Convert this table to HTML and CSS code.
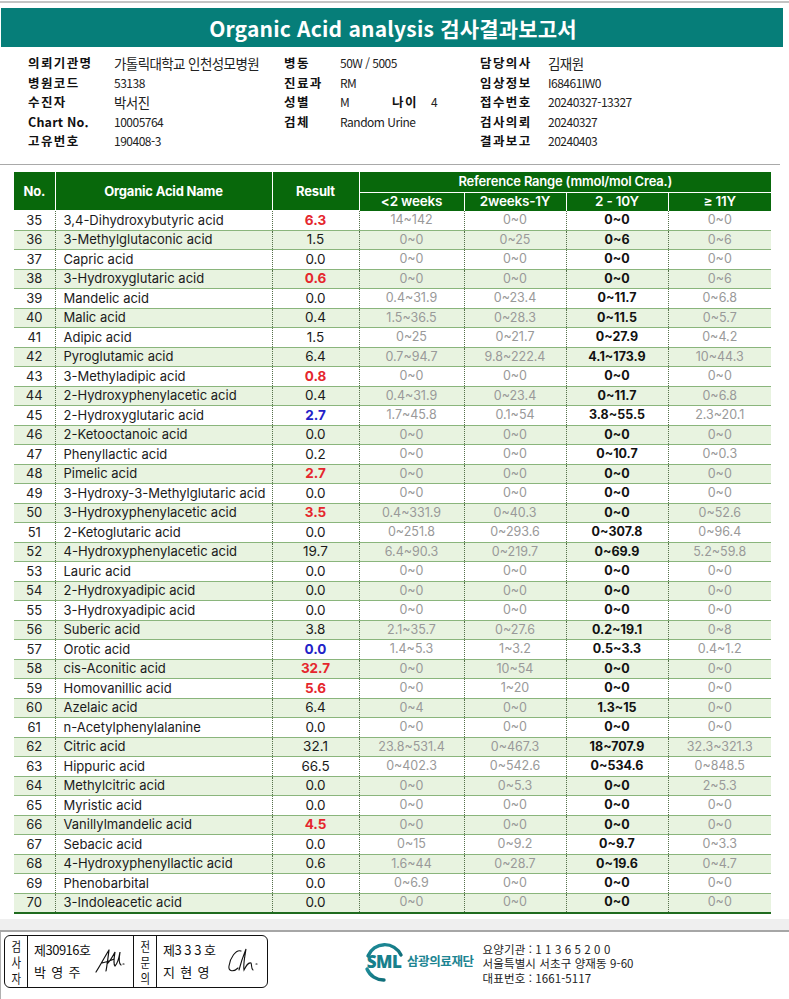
FILE: index.html
```html
<!DOCTYPE html>
<html lang="ko">
<head>
<meta charset="utf-8">
<title>Organic Acid analysis 검사결과보고서</title>
<link rel="stylesheet" href="styles.css">
</head>
<body>
<div class="page">
  <header class="title-bar"><h1>Organic Acid analysis 검사결과보고서</h1></header>

  <section class="info">
    <div class="lbl">의뢰기관명</div><div class="val ko">가톨릭대학교 인천성모병원</div>
    <div class="lbl">병동</div><div class="val">50W / 5005</div>
    <div class="lbl">담당의사</div><div class="val ko">김재원</div>

    <div class="lbl">병원코드</div><div class="val">53138</div>
    <div class="lbl">진료과</div><div class="val">RM</div>
    <div class="lbl">임상정보</div><div class="val">I68461IW0</div>

    <div class="lbl">수진자</div><div class="val ko">박서진</div>
    <div class="lbl">성별</div><div class="val"><span class="sex">M</span><span class="lbl age-lbl">나이</span><span>4</span></div>
    <div class="lbl">접수번호</div><div class="val">20240327-13327</div>

    <div class="lbl latin">Chart No.</div><div class="val">10005764</div>
    <div class="lbl">검체</div><div class="val">Random Urine</div>
    <div class="lbl">검사의뢰</div><div class="val">20240327</div>

    <div class="lbl">고유번호</div><div class="val">190408-3</div>
    <div></div><div></div>
    <div class="lbl">결과보고</div><div class="val">20240403</div>
  </section>

  <hr class="sep">

  <table class="results">
    <colgroup>
      <col class="c-no"><col class="c-name"><col class="c-res">
      <col class="c-r1"><col class="c-r2"><col class="c-r3"><col class="c-r4">
    </colgroup>
    <thead>
      <tr class="h1">
        <th rowspan="2">No.</th>
        <th rowspan="2">Organic Acid Name</th>
        <th rowspan="2">Result</th>
        <th colspan="4">Reference Range (mmol/mol Crea.)</th>
      </tr>
      <tr class="h2">
        <th>&lt;2 weeks</th><th>2weeks-1Y</th><th>2 - 10Y</th><th>≥ 11Y</th>
      </tr>
    </thead>
    <tbody id="rows">
      <tr><td>35</td><td>3,4-Dihydroxybutyric acid</td><td class="red">6.3</td><td>14~142</td><td>0~0</td><td>0~0</td><td>0~0</td></tr>
      <tr><td>36</td><td>3-Methylglutaconic acid</td><td>1.5</td><td>0~0</td><td>0~25</td><td>0~6</td><td>0~6</td></tr>
      <tr><td>37</td><td>Capric acid</td><td>0.0</td><td>0~0</td><td>0~0</td><td>0~0</td><td>0~0</td></tr>
      <tr><td>38</td><td>3-Hydroxyglutaric acid</td><td class="red">0.6</td><td>0~0</td><td>0~0</td><td>0~0</td><td>0~6</td></tr>
      <tr><td>39</td><td>Mandelic acid</td><td>0.0</td><td>0.4~31.9</td><td>0~23.4</td><td>0~11.7</td><td>0~6.8</td></tr>
      <tr><td>40</td><td>Malic acid</td><td>0.4</td><td>1.5~36.5</td><td>0~28.3</td><td>0~11.5</td><td>0~5.7</td></tr>
      <tr><td>41</td><td>Adipic acid</td><td>1.5</td><td>0~25</td><td>0~21.7</td><td>0~27.9</td><td>0~4.2</td></tr>
      <tr><td>42</td><td>Pyroglutamic acid</td><td>6.4</td><td>0.7~94.7</td><td>9.8~222.4</td><td>4.1~173.9</td><td>10~44.3</td></tr>
      <tr><td>43</td><td>3-Methyladipic acid</td><td class="red">0.8</td><td>0~0</td><td>0~0</td><td>0~0</td><td>0~0</td></tr>
      <tr><td>44</td><td>2-Hydroxyphenylacetic acid</td><td>0.4</td><td>0.4~31.9</td><td>0~23.4</td><td>0~11.7</td><td>0~6.8</td></tr>
      <tr><td>45</td><td>2-Hydroxyglutaric acid</td><td class="blue">2.7</td><td>1.7~45.8</td><td>0.1~54</td><td>3.8~55.5</td><td>2.3~20.1</td></tr>
      <tr><td>46</td><td>2-Ketooctanoic acid</td><td>0.0</td><td>0~0</td><td>0~0</td><td>0~0</td><td>0~0</td></tr>
      <tr><td>47</td><td>Phenyllactic acid</td><td>0.2</td><td>0~0</td><td>0~0</td><td>0~10.7</td><td>0~0.3</td></tr>
      <tr><td>48</td><td>Pimelic acid</td><td class="red">2.7</td><td>0~0</td><td>0~0</td><td>0~0</td><td>0~0</td></tr>
      <tr><td>49</td><td>3-Hydroxy-3-Methylglutaric acid</td><td>0.0</td><td>0~0</td><td>0~0</td><td>0~0</td><td>0~0</td></tr>
      <tr><td>50</td><td>3-Hydroxyphenylacetic acid</td><td class="red">3.5</td><td>0.4~331.9</td><td>0~40.3</td><td>0~0</td><td>0~52.6</td></tr>
      <tr><td>51</td><td>2-Ketoglutaric acid</td><td>0.0</td><td>0~251.8</td><td>0~293.6</td><td>0~307.8</td><td>0~96.4</td></tr>
      <tr><td>52</td><td>4-Hydroxyphenylacetic acid</td><td>19.7</td><td>6.4~90.3</td><td>0~219.7</td><td>0~69.9</td><td>5.2~59.8</td></tr>
      <tr><td>53</td><td>Lauric acid</td><td>0.0</td><td>0~0</td><td>0~0</td><td>0~0</td><td>0~0</td></tr>
      <tr><td>54</td><td>2-Hydroxyadipic acid</td><td>0.0</td><td>0~0</td><td>0~0</td><td>0~0</td><td>0~0</td></tr>
      <tr><td>55</td><td>3-Hydroxyadipic acid</td><td>0.0</td><td>0~0</td><td>0~0</td><td>0~0</td><td>0~0</td></tr>
      <tr><td>56</td><td>Suberic acid</td><td>3.8</td><td>2.1~35.7</td><td>0~27.6</td><td>0.2~19.1</td><td>0~8</td></tr>
      <tr><td>57</td><td>Orotic acid</td><td class="blue">0.0</td><td>1.4~5.3</td><td>1~3.2</td><td>0.5~3.3</td><td>0.4~1.2</td></tr>
      <tr><td>58</td><td>cis-Aconitic acid</td><td class="red">32.7</td><td>0~0</td><td>10~54</td><td>0~0</td><td>0~0</td></tr>
      <tr><td>59</td><td>Homovanillic acid</td><td class="red">5.6</td><td>0~0</td><td>1~20</td><td>0~0</td><td>0~0</td></tr>
      <tr><td>60</td><td>Azelaic acid</td><td>6.4</td><td>0~4</td><td>0~0</td><td>1.3~15</td><td>0~0</td></tr>
      <tr><td>61</td><td>n-Acetylphenylalanine</td><td>0.0</td><td>0~0</td><td>0~0</td><td>0~0</td><td>0~0</td></tr>
      <tr><td>62</td><td>Citric acid</td><td>32.1</td><td>23.8~531.4</td><td>0~467.3</td><td>18~707.9</td><td>32.3~321.3</td></tr>
      <tr><td>63</td><td>Hippuric acid</td><td>66.5</td><td>0~402.3</td><td>0~542.6</td><td>0~534.6</td><td>0~848.5</td></tr>
      <tr><td>64</td><td>Methylcitric acid</td><td>0.0</td><td>0~0</td><td>0~5.3</td><td>0~0</td><td>2~5.3</td></tr>
      <tr><td>65</td><td>Myristic acid</td><td>0.0</td><td>0~0</td><td>0~0</td><td>0~0</td><td>0~0</td></tr>
      <tr><td>66</td><td>Vanillylmandelic acid</td><td class="red">4.5</td><td>0~0</td><td>0~0</td><td>0~0</td><td>0~0</td></tr>
      <tr><td>67</td><td>Sebacic acid</td><td>0.0</td><td>0~15</td><td>0~9.2</td><td>0~9.7</td><td>0~3.3</td></tr>
      <tr><td>68</td><td>4-Hydroxyphenyllactic acid</td><td>0.6</td><td>1.6~44</td><td>0~28.7</td><td>0~19.6</td><td>0~4.7</td></tr>
      <tr><td>69</td><td>Phenobarbital</td><td>0.0</td><td>0~6.9</td><td>0~0</td><td>0~0</td><td>0~0</td></tr>
      <tr><td>70</td><td>3-Indoleacetic acid</td><td>0.0</td><td>0~0</td><td>0~0</td><td>0~0</td><td>0~0</td></tr>
    </tbody>
  </table>

  <div class="gray-band"></div>

  <footer class="footer">
    <div class="sign-box">
      <div class="vcell"><span>검</span><span>사</span><span>자</span></div>
      <div class="scell">
        <div class="stext">
          <div>제30916호</div>
          <div class="spaced">박 영 주</div>
        </div>
        <svg class="sig sig1" width="34" height="30" viewBox="0 0 34 30" aria-hidden="true">
          <path d="M3 26 C7 20 11 12 16 4 M9 17 C13 16 17 15 21 13 M16 4 C15 12 14 20 13 25 M14 18 C18 14 20 10 22 6 C21 12 20 18 22 20 C24 18 26 12 27 6 C26 12 26 18 28 19 M30 18 L31 18" fill="none" stroke="#111" stroke-width="1.2" stroke-linecap="round"/>
        </svg>
      </div>
      <div class="vcell"><span>전</span><span>문</span><span>의</span></div>
      <div class="scell">
        <div class="stext">
          <div>제3 3 3 호</div>
          <div class="spaced">지 현 영</div>
        </div>
        <svg class="sig sig2" width="36" height="30" viewBox="0 0 36 30" aria-hidden="true">
          <path d="M15 5 C10 3 4 12 3 20 C2 26 8 26 12 22 M13 24 C15 16 18 8 20 3 C19 10 17 18 18 24 C20 20 22 16 25 17 C26 19 25 23 27 24 M30 18 L31 18" fill="none" stroke="#111" stroke-width="1.1" stroke-linecap="round"/>
        </svg>
      </div>
    </div>

    <div class="logo">
      <svg class="logo-mark" width="42" height="44" viewBox="0 0 42 44" aria-hidden="true">
        <defs>
          <linearGradient id="lg" x1="0" y1="0" x2="1" y2="1">
            <stop offset="0" stop-color="#1f8d9a"/>
            <stop offset="1" stop-color="#0f6e7a"/>
          </linearGradient>
        </defs>
        <path d="M5 17 A18 18 0 0 1 38 16" fill="none" stroke="url(#lg)" stroke-width="3.4" stroke-linecap="round"/>
        <path d="M4 30 A18 18 0 0 0 21 41" fill="none" stroke="url(#lg)" stroke-width="3.4" stroke-linecap="round"/>
        <text x="21" y="29" text-anchor="middle" class="sml">SML</text>
      </svg>
      <span class="logo-name">삼광의료재단</span>
    </div>

    <div class="address">
      <div>요양기관 : 1 1 3 6 5 2 0 0</div>
      <div>서울특별시 서초구 양재동 9-60</div>
      <div>대표번호 : 1661-5117</div>
    </div>
  </footer>
</div>
</body>
</html>
```

FILE: styles.css
```css
html, body {
  margin: 0;
  padding: 0;
  background: #ffffff;
}

body {
  padding-top: 1px;
  font-family: "Noto Sans CJK KR", "Noto Sans", sans-serif;
  color: #111;
}

.page {
  width: 789px;
  border-top: 2px solid #c4c4c4;
}

/* Title */
.title-bar {
  margin: 5px 0 0 1px;
  width: 782px;
  height: 39px;
  background: #067e79;
  display: flex;
  align-items: center;
  justify-content: center;
}

.title-bar h1 {
  margin: 0;
  padding: 2px 0 0 2px;
  font-family: "Noto Sans CJK KR", "Noto Sans", sans-serif;
  font-size: 21px;
  font-weight: 700;
  color: #ffffff;
  letter-spacing: 0.2px;
  line-height: 1;
}

/* Patient info */
.info {
  margin: 6px 0 0 28px;
  display: grid;
  grid-template-columns: 86px 170px 56px 140px 68px 200px;
  grid-auto-rows: 19.5px;
  align-items: center;
  font-size: 12px;
}

.lbl {
  font-size: 12.5px;
  font-weight: 700;
  letter-spacing: 1.4px;
  color: #111;
}

.lbl.latin {
  letter-spacing: 0.2px;
  font-size: 12.5px;
}

.val {
  font-weight: 400;
  color: #222;
  letter-spacing: -0.5px;
  display: flex;
  align-items: center;
}

.val.ko {
  font-size: 13.5px;
  letter-spacing: -0.6px;
}

.sex {
  width: 52px;
}

.age-lbl {
  width: 39px;
}

.sep {
  margin: 13px 0 0 0;
  width: 780px;
  border: 0;
  border-top: 1px solid #a9a9a9;
  height: 0;
}

/* Table */
.results {
  margin: 7px 0 0 14px;
  width: 757px;
  border-collapse: collapse;
  table-layout: fixed;
  font-family: Inter, "Noto Sans", sans-serif;
  font-size: 13px;
}

.c-no { width: 41px; }
.c-name { width: 217px; }
.c-res { width: 87px; }
.c-r1 { width: 105px; }
.c-r2 { width: 102px; }
.c-r3 { width: 102px; }
.c-r4 { width: 103px; }

.results thead th {
  background: #08680b;
  color: #ffffff;
  font-weight: 600;
  font-size: 13px;
  padding: 0;
  border: 1px solid #ffffff;
  line-height: 1;
  letter-spacing: -0.2px;
}

.results thead tr.h1 th {
  height: 20px;
}

.results thead tr.h1 th[rowspan] {
  font-weight: 700;
  padding-top: 2px;
}

.results thead tr.h2 th {
  height: 18px;
  font-size: 13.5px;
}

.results thead tr:first-child th {
  border-top: 0;
}

.results thead th:first-child {
  border-left: 0;
}

.results thead th:last-child {
  border-right: 0;
}

.results thead tr.h2 th {
  border-bottom: 0;
}

.results tbody tr {
  height: 19.5px;
}

.results tbody tr:nth-child(even) {
  background: #e8f3e0;
}

.results tbody td {
  padding: 0;
  line-height: 1;
  text-align: center;
  color: #999999;
  font-size: 12.5px;
  border-top: 1px solid #8ab57c;
  border-left: 1px dotted #55704a;
  white-space: nowrap;
}

.results tbody tr:first-child td {
  border-top: 0;
}

.results tbody tr:last-child td {
  border-bottom: 2px solid #1f6b1f;
}

.results tbody td:first-child {
  border-left: 0;
  color: #222;
  font-size: 13px;
}

.results tbody td:nth-child(2) {
  text-align: left;
  padding-left: 8px;
  color: #1a1a1a;
  font-size: 13px;
}

.results tbody td:nth-child(3) {
  color: #1a1a1a;
  font-size: 13.5px;
}

.results tbody td:nth-child(3).red {
  color: #e5262d;
  font-weight: 700;
}

.results tbody td:nth-child(3).blue {
  color: #1f22c8;
  font-weight: 700;
}

.results tbody td:nth-child(6) {
  color: #111;
  font-weight: 700;
}

/* Gray band */
.gray-band {
  margin-top: 5px;
  height: 11px;
  background: #efefef;
  border-bottom: 2px solid #a6a6a6;
}

/* Footer */
.footer {
  height: 67px;
  border-left: 1px solid #b0b0b0;
  display: flex;
  align-items: flex-start;
  box-sizing: border-box;
}

.sign-box {
  margin: 3px 0 0 3px;
  width: 264px;
  height: 53px;
  box-sizing: border-box;
  border: 1px solid #111;
  border-radius: 6px;
  display: flex;
  font-family: "Noto Sans CJK KR", sans-serif;
  font-size: 13px;
  color: #111;
}

.vcell {
  width: 22px;
  flex: none;
  display: flex;
  flex-direction: column;
  align-items: center;
  justify-content: center;
  font-size: 11.5px;
  line-height: 16px;
  border-right: 1px solid #111;
}

.vcell span {
  display: block;
  transform: scale(0.9, 1.1);
}

.scell {
  flex: none;
  display: flex;
  align-items: center;
  padding-left: 6px;
  box-sizing: border-box;
  border-right: 1px solid #111;
}

.sign-box .scell:nth-child(2) {
  width: 106px;
}

.sign-box .scell:nth-child(4) {
  width: 112px;
  border-right: 0;
}

.stext {
  display: flex;
  flex-direction: column;
  gap: 6px;
  line-height: 16px;
  letter-spacing: -0.5px;
}

.stext .spaced {
  letter-spacing: 0.8px;
}

.sig {
  margin-left: 2px;
}

.sig2 {
  margin-left: 10px;
}

.logo {
  margin: 7px 0 0 95px;
  display: flex;
  align-items: center;
}

.sml {
  font-family: "Open Sans", "Noto Sans", sans-serif;
  font-size: 17px;
  font-weight: 800;
  fill: #17808c;
  letter-spacing: -0.6px;
}

.logo-name {
  margin-left: 2px;
  font-family: "Noto Sans CJK KR", sans-serif;
  font-size: 12.5px;
  font-weight: 700;
  color: #1c8592;
  letter-spacing: -0.4px;
}

.address {
  margin: 10px 0 0 9px;
  font-family: "Noto Sans CJK KR", sans-serif;
  font-size: 11.5px;
  line-height: 14.5px;
  color: #222;
  letter-spacing: 0.1px;
}
```
